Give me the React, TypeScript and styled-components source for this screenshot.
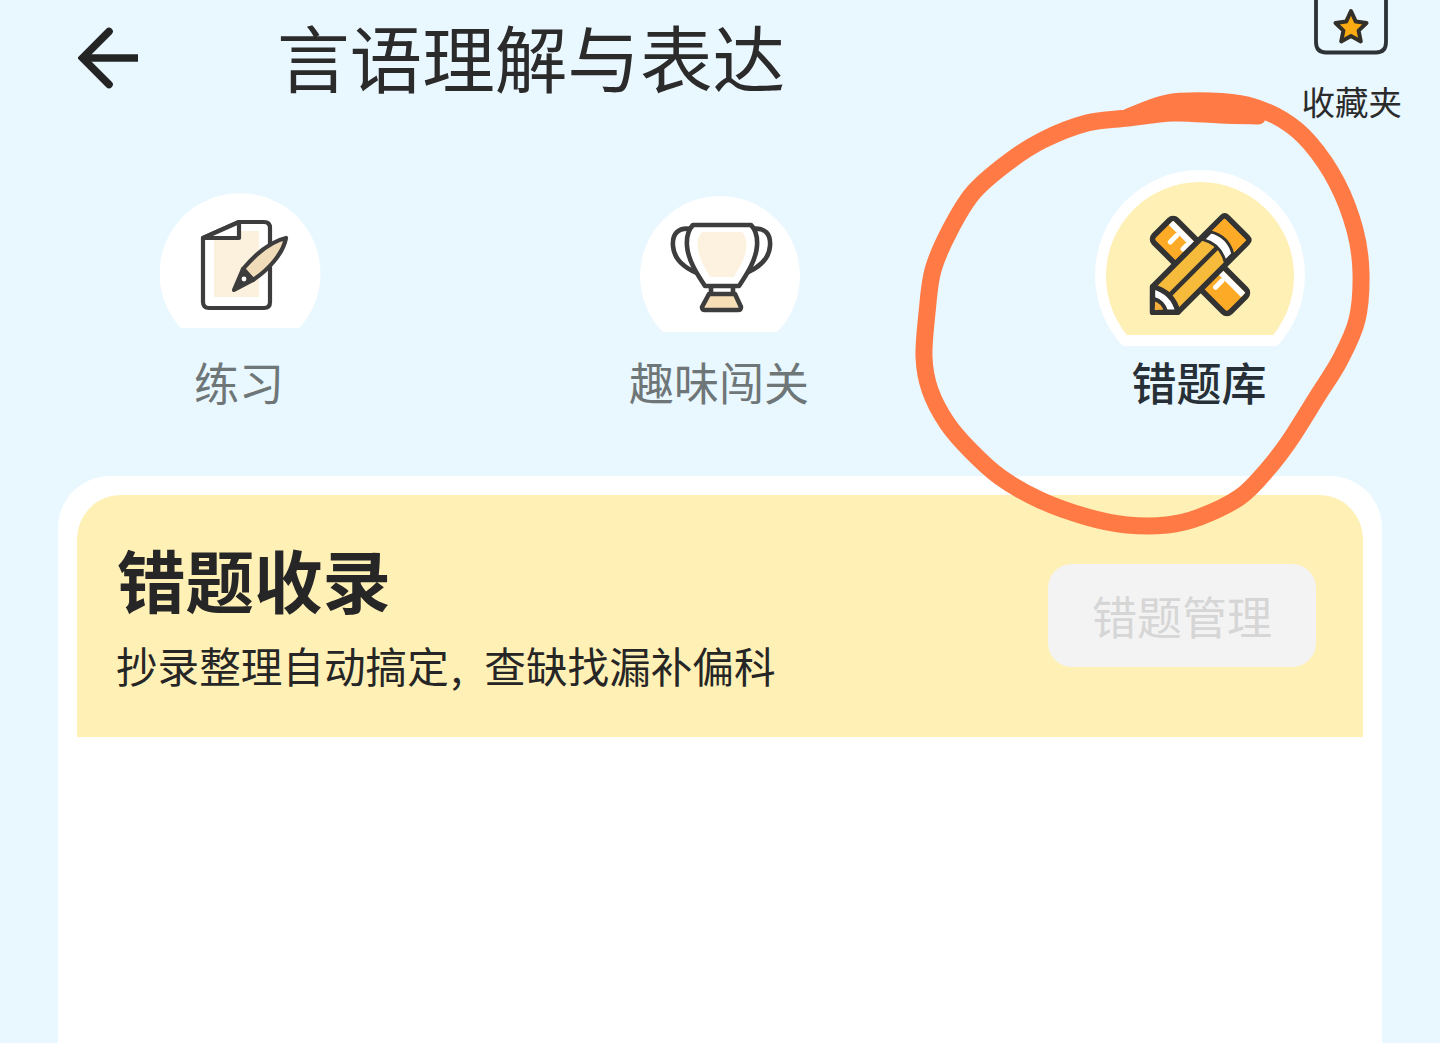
import styled, { createGlobalStyle } from "styled-components";

const GlobalStyle = createGlobalStyle`
  html, body {
    margin: 0;
    padding: 0;
    background: #e9f7ff;
  }
  * {
    box-sizing: border-box;
  }
`;

const Page = styled.div`
  position: relative;
  width: 1440px;
  height: 1043px;
  overflow: hidden;
  background: #e9f7ff;
  font-family: "Noto Sans CJK SC", "Noto Sans", sans-serif;
  color: #262626;
`;

const Header = styled.header`
  display: flex;
  align-items: flex-start;
  height: 165px;
  padding: 0 38px 0 78px;
`;

const BackButton = styled.button`
  width: 62px;
  height: 116px;
  padding: 0;
  border: none;
  background: none;
  display: flex;
  align-items: center;
`;

const Title = styled.h1`
  margin: 0 0 0 137px;
  font-size: 72.6px;
  line-height: 112px;
  font-weight: 400;
  white-space: nowrap;
  color: #2b2b2b;
`;

const Favorites = styled.div`
  margin-left: auto;
  display: flex;
  flex-direction: column;
  align-items: center;
`;

const FavoritesLabel = styled.span`
  margin-top: 18px;
  font-size: 33.5px;
  line-height: 54px;
  color: #2b2b2b;
`;

const Tabs = styled.nav`
  display: grid;
  grid-template-columns: repeat(3, 480px);
`;

const Tab = styled.div`
  height: 249px;
  display: flex;
  flex-direction: column;
  align-items: center;
  justify-content: flex-end;
`;

const Badge = styled.div<{ $size: number; $height: number; $color: string; $gap?: number }>`
  width: ${(p) => p.$size}px;
  height: ${(p) => p.$height}px;
  margin-bottom: ${(p) => p.$gap ?? 0}px;
  background: ${(p) => p.$color};
  clip-path: circle(${(p) => p.$size / 2}px at ${(p) => p.$size / 2}px ${(p) => p.$size / 2}px);
  display: flex;
  justify-content: center;
  align-items: flex-end;
`;

const TabIcon = styled.svg<{ $lift: number; $shift?: number }>`
  flex: none;
  margin-bottom: ${(p) => p.$lift}px;
  margin-left: ${(p) => p.$shift ?? 0}px;
`;

const TabLabel = styled.span<{ $active?: boolean }>`
  height: 60px;
  margin-right: 2px;
  font-size: 45px;
  line-height: 56px;
  font-weight: ${(p) => (p.$active ? 500 : 400)};
  color: ${(p) => (p.$active ? "#263036" : "#6e7678")};
`;

const Card = styled.section`
  height: 567px;
  margin: 62px 58px 0;
  padding: 19px 19px 0;
  background: #fff;
  border-radius: 52px 52px 0 0;
`;

const Banner = styled.div`
  height: 242px;
  padding: 44px 47px 0 39px;
  background: #fff0b5;
  border-radius: 44px 44px 0 0;
  display: flex;
  justify-content: space-between;
  align-items: flex-start;
`;

const BannerTitle = styled.h2`
  margin: 0 0 0 1px;
  font-size: 68.5px;
  line-height: 80px;
  font-weight: 700;
  white-space: nowrap;
  color: #262626;
`;

const BannerText = styled.p`
  margin: 21px 0 0;
  font-size: 41.6px;
  line-height: 50px;
  white-space: nowrap;
  color: #262626;
`;

const Comma = styled.span`
  margin: 0 22px 0 2px;
`;

const ManageButton = styled.button`
  width: 268px;
  height: 103px;
  margin-top: 25px;
  border: none;
  border-radius: 24px;
  background: #f3f3f3;
  font-family: inherit;
  font-size: 45px;
  color: #d6d6d6;
`;

const Scribble = styled.svg`
  position: absolute;
  inset: 0;
  pointer-events: none;
`;

const ink = "#3d3d3d";

const scribblePoints: [number, number][] = [
  [1258, 116], [1220, 115], [1173, 113], [1128, 118], [1087, 123], [1043, 140],
  [1007, 163], [973, 193], [950, 230], [933, 270], [927, 313], [924, 357],
  [930, 390], [947, 423], [970, 450], [1000, 477], [1040, 500], [1087, 517],
  [1127, 525], [1167, 525], [1200, 517], [1240, 497], [1267, 470], [1290, 440],
  [1317, 397], [1340, 360], [1357, 320], [1361, 273], [1355, 230], [1337, 183],
  [1310, 143], [1283, 120], [1247, 105], [1210, 101], [1167, 103], [1128, 117],
];

function smoothPath(pts: [number, number][]) {
  let d = `M${pts[0][0]},${pts[0][1]}`;
  for (let i = 0; i < pts.length - 1; i++) {
    const p0 = pts[i - 1] ?? pts[i];
    const p1 = pts[i];
    const p2 = pts[i + 1];
    const p3 = pts[i + 2] ?? p2;
    const c1x = p1[0] + (p2[0] - p0[0]) / 6;
    const c1y = p1[1] + (p2[1] - p0[1]) / 6;
    const c2x = p2[0] - (p3[0] - p1[0]) / 6;
    const c2y = p2[1] - (p3[1] - p1[1]) / 6;
    d += ` C${c1x},${c1y} ${c2x},${c2y} ${p2[0]},${p2[1]}`;
  }
  return d;
}

function BackArrow() {
  return (
    <svg width="62" height="62" viewBox="0 0 62 62" fill="none" stroke="#242424" strokeWidth="7.6">
      <path d="M31 4.5 L4.5 31 L31 57.5" strokeLinecap="round" strokeLinejoin="miter" />
      <path d="M4 31 H60" />
    </svg>
  );
}

function FolderStar() {
  return (
    <svg width="76" height="56" viewBox="0 0 76 56" fill="none">
      <path
        d="M2 -10 V42 Q2 52.5 12 52.5 H62 Q72 52.5 72 42 V-10"
        stroke="#2c3236"
        strokeWidth="3.8"
      />
      <path
        d="M37 11 L41.8 21.6 L52.5 23 L44.6 30.6 L46.8 41.4 L37 36 L27.2 41.4 L29.4 30.6 L21.5 23 L32.2 21.6 Z"
        fill="#fcaa12"
        stroke="#33302a"
        strokeWidth="4"
        strokeLinejoin="round"
      />
    </svg>
  );
}

function PaperPenIcon() {
  return (
    <TabIcon $lift={12} $shift={12} width="100" height="100" viewBox="0 0 100 100" fill="none">
      <path
        d="M7 22 L43 6 H68 Q74 6 74 12 V86 Q74 92 68 92 H13 Q7 92 7 86 Z"
        fill="#fff"
        stroke={ink}
        strokeWidth="4.2"
        strokeLinejoin="round"
      />
      <rect x="18" y="15" width="45" height="66" fill="#fcf1dc" />
      <path d="M7 22 H43 V6 Z" fill="#fff" stroke={ink} strokeWidth="4.2" strokeLinejoin="round" />
      <path
        d="M47 53 C58 40 72 26 90 22 C87 38 72 54 57 64 Z"
        fill="#f1dcb9"
        stroke={ink}
        strokeWidth="4.2"
        strokeLinejoin="round"
      />
      <path d="M47 53 L38 74 L57 64 Z" fill={ink} stroke={ink} strokeWidth="4.2" strokeLinejoin="round" />
      <circle cx="48" cy="63" r="2.4" fill="#fff" />
    </TabIcon>
  );
}

function TrophyIcon() {
  return (
    <TabIcon $lift={13} $shift={2} width="110" height="105" viewBox="0 0 110 105" fill="none">
      <path
        d="M25 15 C12 13 6 20 7 32 C8 47 22 56 36 61"
        stroke={ink}
        strokeWidth="4.6"
        strokeLinecap="round"
      />
      <path
        d="M86 15 C99 13 105 20 104 32 C103 47 89 56 75 61"
        stroke={ink}
        strokeWidth="4.6"
        strokeLinecap="round"
      />
      <path
        d="M27 11 H85 Q92 18 91 32 C90 46 81 60 73 72 H39 C31 60 22 46 21 32 Q20 18 27 11 Z"
        fill="#fff"
        stroke={ink}
        strokeWidth="4.6"
        strokeLinejoin="round"
      />
      <path d="M36 18 H76 Q82 24 80 36 C78 47 72 55 68 63 H44 C40 55 34 47 32 36 Q30 24 36 18 Z" fill="#fdf2df" />
      <path d="M45 72 V80 M67 72 V80" stroke={ink} strokeWidth="4.6" />
      <path
        d="M43 80 H69 L75 93 Q75 96 72 96 H39 Q36 96 36 93 Z"
        fill="#f6deb6"
        stroke={ink}
        strokeWidth="4.6"
        strokeLinejoin="round"
      />
    </TabIcon>
  );
}

function RulerPencilIcon() {
  return (
    <TabIcon $lift={14} width="110" height="110" viewBox="0 0 110 110" fill="none">
      <g transform="translate(55 55) rotate(45)" strokeLinejoin="round">
        <rect x="-54" y="-16" width="108" height="32" rx="5" fill="#fdab27" stroke="#333" strokeWidth="5.6" />
        <rect x="-51" y="-13" width="102" height="6" fill="#fff" />
        <path d="M-38 -5 V4 M-24 -5 V0 M26 -5 V4" stroke="#fff" strokeWidth="5" strokeLinecap="round" />
      </g>
      <g transform="translate(50 58.7) rotate(-45)" strokeLinejoin="round">
        <path d="M-60 0 L-42 -18 H56 Q60 -18 60 -14 V14 Q60 18 56 18 H-42 Z" fill="#f7bb3c" stroke="#333" strokeWidth="5.6" />
        <path d="M-38 0 H34" stroke="#333" strokeWidth="4.6" />
        <path d="M38 -15.5 Q47 0 38 15.5 H57 V-15.5 Z" fill="#fdab27" />
        <path d="M27 -15.5 Q36 0 27 15.5 H38 Q47 0 38 -15.5 Z" fill="#fff" stroke="#333" strokeWidth="3" />
        <path d="M-60 0 L-42 -18 Q-31 0 -42 18 Z" fill="#fff" stroke="#333" strokeWidth="5.2" />
        <path d="M-60 0 L-50 -9 Q-45 0 -50 9 Z" fill="#f7ad3a" stroke="#333" strokeWidth="4" />
      </g>
    </TabIcon>
  );
}

export default function App() {
  return (
    <Page>
      <GlobalStyle />
      <Header>
        <BackButton>
          <BackArrow />
        </BackButton>
        <Title>言语理解与表达</Title>
        <Favorites>
          <FolderStar />
          <FavoritesLabel>收藏夹</FavoritesLabel>
        </Favorites>
      </Header>
      <Tabs>
        <Tab>
          <Badge $size={161} $height={135} $color="#fff" $gap={26}>
            <PaperPenIcon />
          </Badge>
          <TabLabel>练习</TabLabel>
        </Tab>
        <Tab>
          <Badge $size={160} $height={136} $color="#fff" $gap={22}>
            <TrophyIcon />
          </Badge>
          <TabLabel>趣味闯关</TabLabel>
        </Tab>
        <Tab>
          <Badge $size={210} $height={176} $color="#fff" $gap={8}>
            <Badge $size={188} $height={153} $color="#fff0b5" $gap={11}>
              <RulerPencilIcon />
            </Badge>
          </Badge>
          <TabLabel $active>错题库</TabLabel>
        </Tab>
      </Tabs>
      <Card>
        <Banner>
          <div>
            <BannerTitle>错题收录</BannerTitle>
            <BannerText>抄录整理自动搞定<Comma>,</Comma>查缺找漏补偏科</BannerText>
          </div>
          <ManageButton>错题管理</ManageButton>
        </Banner>
      </Card>
      <Scribble width="1440" height="1043" viewBox="0 0 1440 1043" fill="none">
        <path d={smoothPath(scribblePoints)} stroke="#ff7a45" strokeWidth="17" strokeLinecap="round" strokeLinejoin="round" />
      </Scribble>
    </Page>
  );
}
